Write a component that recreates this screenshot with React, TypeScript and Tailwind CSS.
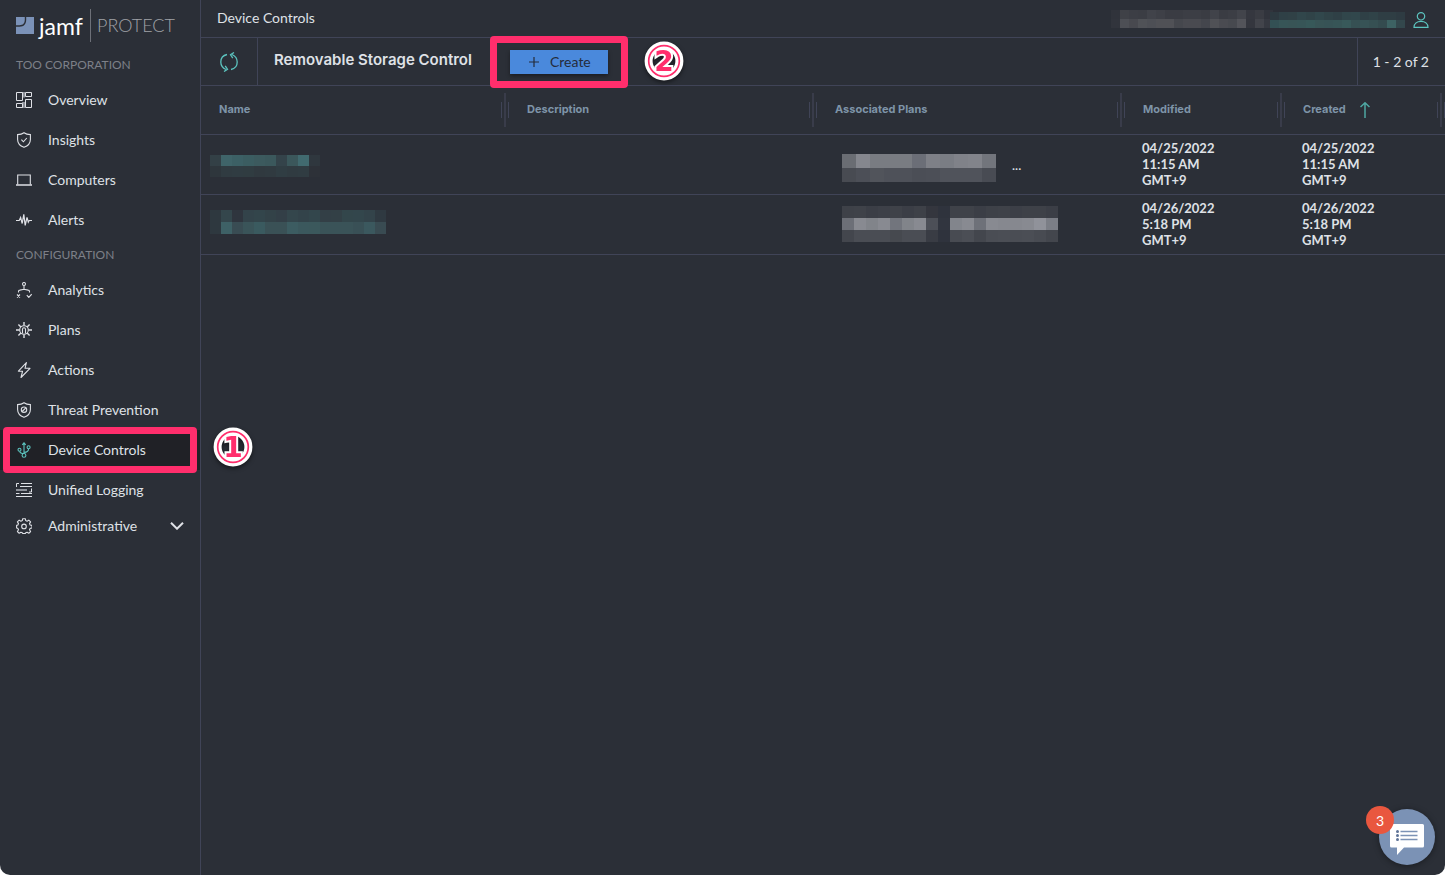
import { useState } from "react";
import type { ReactNode } from "react";
import { clsx } from "clsx";

interface NavItem {
  label: string;
  icon: ReactNode;
}

interface DeviceControl {
  name: ReactNode;
  plans: ReactNode;
  truncated: boolean;
  modified: string[];
  created: string[];
}

function Icon({ children }: { children: ReactNode }) {
  return (
    <svg viewBox="0 0 16 16" className="h-4 w-4 shrink-0" fill="none" stroke="currentColor" strokeWidth="1.1" aria-hidden="true">
      {children}
    </svg>
  );
}

const shield = "M8 .8 C6.4 2 4 2.6 1.6 2.6 V7.5 C1.6 11.3 4.4 14 8 15.3 C11.6 14 14.4 11.3 14.4 7.5 V2.6 C12 2.6 9.6 2 8 .8 Z";

const overviewItems: NavItem[] = [
  {
    label: "Overview",
    icon: (
      <Icon>
        <path d="M6 0h3v5.5H6zM6 10h3v6H6z" fill="#8d9199" stroke="none" />
        <path d="M.5 .5h6v8h-6zM9.5 .5h6v4h-6zM.5 11.5h6v4h-6zM9.5 7.5h6v8h-6z" strokeWidth="1" />
      </Icon>
    ),
  },
  {
    label: "Insights",
    icon: (
      <Icon>
        <path d={shield} />
        <path d="M5.4 7.6l2 2.2 3.4-3.8" />
      </Icon>
    ),
  },
  {
    label: "Computers",
    icon: (
      <Icon>
        <path d="M1.7 12.5V3h12.6v9.5" />
        <path d="M0 13h16" strokeWidth="1.5" />
      </Icon>
    ),
  },
  {
    label: "Alerts",
    icon: (
      <Icon>
        <path d="M0 8.5h3.2l1.4-3 1.6 6L7.8 2.4l1.4 11 1.8-8 1.3 4.8.9-1.7H16" strokeWidth="1.2" />
      </Icon>
    ),
  },
];

const configItems: NavItem[] = [
  {
    label: "Analytics",
    icon: (
      <Icon>
        <circle cx="8" cy="2" r="1.5" />
        <path d="M8 3.6v4M2.5 10.5V9.4c0-1 .6-1.3 1.4-1.3L8 7.3l4.1.8c.8 0 1.4.3 1.4 1.3v1.1M1 12.5l3 3M4 12.5l-3 3M10.8 13.2l2 2.2 2.9-3.2" />
      </Icon>
    ),
  },
  {
    label: "Plans",
    icon: (
      <Icon>
        <circle cx="8" cy="8" r="4.3" />
        <path d="M8 0v3.6M8 12.4V16M0 8h3.6M12.4 8H16M2.4 2.4l2.5 2.5M11.1 11.1l2.5 2.5M2.4 13.6l2.5-2.5M11.1 4.9l2.5-2.5" strokeWidth="1.4" />
        <path d="M6.5 11.5V7.3c0-2 3-2 3 0v4.2" />
      </Icon>
    ),
  },
  {
    label: "Actions",
    icon: (
      <Icon>
        <path d="M10.4 .6L2.4 9.2h4.2L5 15.5l9-9.2H9z" strokeLinejoin="round" />
      </Icon>
    ),
  },
  {
    label: "Threat Prevention",
    icon: (
      <Icon>
        <path d={shield} />
        <circle cx="8" cy="7.7" r="2.7" />
        <path d="M6.2 9.5l3.6-3.6" />
      </Icon>
    ),
  },
  {
    label: "Device Controls",
    icon: (
      <Icon>
        <path d="M8 11.4V1.2M6.3 2.8L8 .8l1.7 2M3.7 9.3c.4 1.9 2 2.2 4.3 2.2M12.6 6.8c0 2.6-1.6 3.6-4.6 3.6" />
        <circle cx="3.5" cy="7.7" r="1.5" />
        <circle cx="12.6" cy="5.2" r="1.5" />
        <circle cx="8" cy="13.4" r="1.9" />
      </Icon>
    ),
  },
  {
    label: "Unified Logging",
    icon: (
      <Icon>
        <path d="M.5 5V1.5H3M5 1.5h11M4 4.500h12M15.5 6.5V10H13M0 11.500h3.5M5 11.5h11M0 14.5h16" strokeWidth="1" />
        <path d="M0 8h11" stroke="#8d9199" strokeWidth="2" />
      </Icon>
    ),
  },
];

// Pixelated placeholder for redacted text, one colour per block
function Mosaic({ rows, cell, className }: { rows: string[][]; cell: [number, number]; className?: string }) {
  const [w, h] = cell;
  const cols = Math.max(...rows.map((row) => row.length));
  return (
    <svg width={cols * w} height={rows.length * h} className={clsx("block shrink-0", className)} shapeRendering="crispEdges" aria-hidden="true">
      {rows.map((row, y) =>
        row.map((fill, x) => <rect key={`${x}-${y}`} x={x * w} y={y * h} width={w} height={h} fill={fill} />)
      )}
    </svg>
  );
}

const controls: DeviceControl[] = [
  {
    name: (
      <Mosaic
        cell={[11, 11]}
        className="-ml-2 mt-1"
        rows={[
          ["#334046", "#3f6469", "#3c6065", "#3b5d61", "#3c5a5e", "#3b585c", "#34434a", "#3b575b", "#416a6f", "#2f373e"],
          ["#2e363c", "#303b41", "#303c42", "#303c41", "#30393f", "#303a40", "#303d43", "#303b41", "#303c42", "#2d3138"],
        ]}
      />
    ),
    plans: (
      <Mosaic
        cell={[14, 14]}
        className="mt-2"
        rows={[
          ["#6a6d73", "#85878e", "#797c82", "#797c82", "#797c82", "#6b6e77", "#7e8087", "#7a7d84", "#808289", "#82848b", "#72757c"],
          ["#484b52", "#4c4f57", "#51545b", "#4e5159", "#4e5159", "#4b4e56", "#4c4f57", "#50535b", "#50535b", "#50535b", "#484b53"],
        ]}
      />
    ),
    truncated: true,
    modified: ["04/25/2022", "11:15 AM", "GMT+9"],
    created: ["04/25/2022", "11:15 AM", "GMT+9"],
  },
  {
    name: (
      <Mosaic
        cell={[11, 12]}
        className="-ml-2 mb-1"
        rows={[
          ["#2e383f", "#34464c", "#2f353e", "#33434a", "#33454b", "#334248", "#333f47", "#34464c", "#33434a", "#33464c", "#333f46", "#334046", "#33464b", "#33464c", "#33434a", "#2f3941"],
          ["#2e383f", "#3e6166", "#394c53", "#3a5459", "#3a5a5f", "#3a5156", "#3a5156", "#3c5c61", "#3b585d", "#3b585c", "#3a5358", "#3a5358", "#3a5358", "#395056", "#3b585e", "#394b52"],
        ]}
      />
    ),
    plans: (
      <Mosaic
        cell={[12, 12]}
        rows={[
          ["#3e4148", "#3f4249", "#3b3e46", "#3d4048", "#3f4249", "#3b3e46", "#3e4148", "#34363e", "#2f333d", "#3f4249", "#3f4249", "#3b3e46", "#3e4148", "#3f4249", "#3c3f47", "#3e4148", "#3e4148", "#3b3e46"],
          ["#6c6f77", "#888a91", "#81848a", "#888a91", "#72757d", "#81848a", "#888a91", "#4c4f57", "#31353f", "#82858c", "#888a91", "#6e7179", "#888a91", "#86888f", "#86888f", "#888a91", "#90929a", "#7b7e86"],
          ["#43464d", "#4a4d54", "#4a4d54", "#4a4d54", "#46494f", "#4a4d54", "#4a4d54", "#393c44", "#2f333d", "#484b52", "#4b4e55", "#43464d", "#4a4d54", "#4b4e55", "#4a4d54", "#4b4e55", "#484b52", "#43464d"],
        ]}
      />
    ),
    truncated: false,
    modified: ["04/26/2022", "5:18 PM", "GMT+9"],
    created: ["04/26/2022", "5:18 PM", "GMT+9"],
  },
];

// Numbered marker used by the walkthrough overlay
function StepMarker({ step, className }: { step: string; className: string }) {
  return (
    <svg viewBox="0 0 40 40" className={clsx("pointer-events-none absolute z-10 h-10 w-10 drop-shadow-[0_2px_2px_rgba(0,0,0,0.5)]", className)}>
      <circle cx="20" cy="20" r="15.4" fill="none" stroke="#fff" strokeWidth="8" />
      <text
        x="20"
        y="30"
        textAnchor="middle"
        fill="#ff2e6c"
        stroke="#fff"
        strokeWidth="4"
        paintOrder="stroke"
        className="font-['DejaVu_Sans','Liberation_Sans',sans-serif] text-[28px] font-bold"
      >
        {step}
      </text>
      <circle cx="20" cy="20" r="15.3" fill="none" stroke="#ff2e6c" strokeWidth="1.7" />
    </svg>
  );
}

function Highlight({ className }: { className: string }) {
  return <span className={clsx("pointer-events-none absolute z-10 rounded-[4px] border-[7px] border-[#ff2e6c]", className)} />;
}

function SectionHeading({ children }: { children: ReactNode }) {
  return <h2 className="flex h-[30px] items-center px-4 text-[12px] uppercase text-[#7d8088]">{children}</h2>;
}

function NavLink({ item, active, onSelect }: { item: NavItem; active: boolean; onSelect: () => void }) {
  return (
    <a
      href="#"
      onClick={onSelect}
      className={clsx("flex h-10 items-center gap-4 px-4 text-[14px]", active && "bg-[#202126]")}
    >
      <span className={clsx(active ? "text-[#5cc4bf]" : "text-[#dfe1e6]")}>{item.icon}</span>
      <span className="pb-0.5">{item.label}</span>
    </a>
  );
}

function Sidebar() {
  const [active, setActive] = useState("Device Controls");

  return (
    <aside className="w-[201px] shrink-0 border-r border-[#404457]">
      <div className="flex h-[50px] items-center px-4">
        <svg viewBox="0 0 18 17" className="h-[17px] w-[18px] shrink-0" fill="#7b92b8" aria-hidden="true">
          <path d="M0 0h8.8v2.5C8.8 6.5 7 8.2 3.5 8.2H0z" />
          <path d="M10.2 0H18v17H0V9.7h3.5c4.5 0 6.7-2.5 6.7-7.2z" />
        </svg>
        <span className="w-[56px] pl-[5px] pt-px text-[23px] leading-8 text-white">jamf</span>
        <span className="h-[33px] w-px bg-[#6d7078]" />
        <span className="ml-[6px] text-[18px] font-light text-[#a0a2a7]">PROTECT</span>
      </div>

      <nav>
        <SectionHeading>Too Corporation</SectionHeading>
        {overviewItems.map((item) => (
          <NavLink key={item.label} item={item} active={active === item.label} onSelect={() => setActive(item.label)} />
        ))}
        <SectionHeading>Configuration</SectionHeading>
        {configItems.map((item) => (
          <div key={item.label} className="relative">
            <NavLink item={item} active={active === item.label} onSelect={() => setActive(item.label)} />
            {item.label === "Device Controls" && (
              <>
                <Highlight className="-inset-y-[3px] left-[3px] right-[3px]" />
                <StepMarker step="1" className="-right-[53px] -top-[3px]" />
              </>
            )}
          </div>
        ))}
        <button type="button" className="flex h-8 w-full items-center gap-4 px-4 text-left text-[14px]">
          <Icon>
            <path d="M6.7 .7h2.6l.4 1.9 1.4.6 1.7-1.1 1.8 1.8-1.1 1.7.6 1.4 1.9.4V10l-1.9.4-.6 1.4 1.1 1.7-1.8 1.8-1.7-1.1-1.4.6-.4 .8H6.7l-.4-.8-1.4-.6-1.7 1.1-1.8-1.8 1.1-1.7-.6-1.4L.6 10V7.4L1.9 7l.6-1.4L1.4 3.9l1.8-1.8 1.7 1.1 1.4-.6z" strokeLinejoin="round" />
            <circle cx="8" cy="8.4" r="2.3" />
          </Icon>
          <span className="flex-1 pb-0.5">Administrative</span>
          <svg viewBox="0 0 14 8" className="h-2 w-[14px]" fill="none" stroke="currentColor" strokeWidth="2" aria-hidden="true">
            <path d="M1 .7l6 6 6-6" />
          </svg>
        </button>
      </nav>
    </aside>
  );
}

function ColumnHeader({ label, sorted }: { label: string; sorted?: boolean }) {
  return (
    <th
      scope="col"
      className="relative p-0 pl-[18px] text-left font-['Inter','Liberation_Sans',sans-serif] text-[11px] font-bold text-[#7e94a8]"
    >
      <span className="flex items-center gap-[14px]">
        <span className="pb-0.5">{label}</span>
        {sorted && (
          <svg viewBox="0 0 10 16" className="h-4 w-[10px] text-[#4fa8a3]" fill="none" stroke="currentColor" strokeWidth="1.5" aria-hidden="true">
            <path d="M5 16V1M.5 5L5 .8 9.5 5" />
          </svg>
        )}
      </span>
      <span className="absolute inset-y-0 right-0 flex items-center gap-[2px]">
        <span className="h-4 w-px bg-[#404457]" />
        <span className="h-[34px] w-[2px] bg-[#393c4a]" />
        <span className="h-4 w-px bg-[#404457]" />
      </span>
    </th>
  );
}

function DateCell({ lines }: { lines: string[] }) {
  return (
    <td className="p-0 pl-[17px] text-[13px] font-bold leading-4">
      {lines.map((line) => (
        <div key={line}>{line}</div>
      ))}
    </td>
  );
}

function ControlsTable() {
  return (
    <table className="w-full table-fixed border-collapse">
      <colgroup>
        <col />
        <col />
        <col />
        <col className="w-[160px]" />
        <col className="w-[160px]" />
      </colgroup>
      <thead>
        <tr className="h-12 border-b border-[#404457]">
          <ColumnHeader label="Name" />
          <ColumnHeader label="Description" />
          <ColumnHeader label="Associated Plans" />
          <ColumnHeader label="Modified" />
          <ColumnHeader label="Created" sorted />
        </tr>
      </thead>
      <tbody>
        {controls.map((control, i) => (
          <tr key={i} className="h-[60px] border-b border-[#404457]">
            <td className="p-0 pl-[17px]">{control.name}</td>
            <td />
            <td className="p-0 pl-[25px]">
              <div className="flex items-center gap-4 text-[13px] font-semibold">
                {control.plans}
                {control.truncated && <span className="pt-1">...</span>}
              </div>
            </td>
            <DateCell lines={control.modified} />
            <DateCell lines={control.created} />
          </tr>
        ))}
      </tbody>
    </table>
  );
}

function ChatButton() {
  return (
    <button
      type="button"
      aria-label="Open messages"
      className="fixed bottom-[10px] right-[10px] flex h-14 w-14 items-center justify-center rounded-full bg-[#7b92b5] shadow-[0_1px_6px_rgba(0,0,0,0.4)]"
    >
      <svg viewBox="0 0 34 31" className="mt-1 h-[31px] w-[34px]" aria-hidden="true">
        <path d="M1.5 0h31Q34 0 34 1.5V22q0 1.5-1.5 1.5H14L7 31v-7.5H1.5Q0 23.5 0 22V1.5Q0 0 1.5 0z" fill="#fff" />
        <g stroke="#7b92b5" strokeWidth="1.5">
          <path d="M10.5 7.5h17M10.5 11.5h17M10.5 15.5h17" />
        </g>
        <g fill="#5f7497">
          <circle cx="7.5" cy="7.5" r="1.5" />
          <circle cx="7.5" cy="11.5" r="1.5" />
          <circle cx="7.5" cy="15.5" r="1.5" />
        </g>
      </svg>
      <span className="absolute -left-[13px] -top-[3px] flex h-7 w-7 items-center justify-center rounded-full bg-[#e9573f] text-[14px] text-white">
        3
      </span>
    </button>
  );
}

export default function App() {
  return (
    <div className="bg-white font-['Lato','Liberation_Sans',sans-serif]">
      <div className="flex min-h-screen rounded-b-[10px] bg-[#2b2f37] text-[#dfe1e6]">
        <Sidebar />

        <main className="min-w-0 flex-1">
          <header className="flex h-[38px] items-center justify-between border-b border-[#404457] px-4">
            <span className="pb-0.5 text-[14px]">Device Controls</span>
            <div className="flex items-end">
              <Mosaic
                cell={[9, 9]}
                className="-mr-[3px]"
                rows={[
                  ["#30333b", "#3f4147", "#3c3e45", "#3b3d44", "#41434a", "#3e4047", "#3a3c43", "#3a3c43", "#3c3e45", "#3c3e45", "#3a3c43", "#41434a", "#3a3c43", "#3c3e45", "#42444b", "#35373f", "#3a3c43", "#31343c"],
                  ["#31343c", "#4d4f55", "#48494f", "#505257", "#4d4f55", "#505156", "#505156", "#45474d", "#494a50", "#494a50", "#44464d", "#505156", "#4a4b51", "#47494f", "#53545a", "#34363e", "#42444b", "#363941"],
                ]}
              />
              <Mosaic
                cell={[9, 8]}
                className="mr-2"
                rows={[
                  ["#2d3940", "#2f4046", "#304146", "#31464b", "#304348", "#31474c", "#304348", "#2f4046", "#31464b", "#31474c", "#2f4046", "#304348", "#2f3e44", "#2f3e44", "#2e3b42"],
                  ["#335054", "#375557", "#385456", "#375557", "#375859", "#385456", "#375356", "#375557", "#38595a", "#365053", "#375356", "#365053", "#344b4f", "#3d6263", "#33474c"],
                ]}
              />
              <button type="button" aria-label="Account" className="text-[#5cc4bf]">
                <svg viewBox="0 0 16 16" className="block h-4 w-4" fill="none" stroke="currentColor" strokeWidth="1.2" aria-hidden="true">
                  <circle cx="8" cy="4.3" r="3.7" />
                  <path d="M1 15.4C1 11.5 4 9.3 8 9.3s7 2.2 7 6.1z" />
                </svg>
              </button>
            </div>
          </header>

          <div className="flex h-12 items-center border-b border-[#404457]">
            <button
              type="button"
              aria-label="Refresh"
              className="flex w-[57px] items-center justify-center self-stretch border-r border-[#404457] text-[#5cc4bf]"
            >
              <svg viewBox="0 0 18 20" className="h-5 w-[18px]" fill="none" stroke="currentColor" strokeWidth="1.3" aria-hidden="true">
                <path d="M7 2.5C3 3.4 .8 6.5 .8 10c0 3.2 1.8 6 5.2 7.5" />
                <path d="M4 19.5l3.5-2.3-2.3-3.4M11 17.5c4-.9 6.2-4 6.2-7.5 0-3.2-1.8-6-5.2-7.5" />
                <path d="M14 .5l-3.5 2.3 2.3 3.4" />
              </svg>
            </button>
            <h1 className="w-[236px] whitespace-nowrap pb-0.5 pl-4 font-['Inter','Liberation_Sans',sans-serif] text-[15px] font-semibold">
              Removable Storage Control
            </h1>
            <div className="relative ml-4">
              <button
                type="button"
                className="flex h-6 items-center gap-[11px] bg-[#4a89dc] pl-[19px] pr-[17px] text-[14px] text-[#252c3a] shadow-[0_2px_4px_rgba(0,0,0,0.4)]"
              >
                <svg viewBox="0 0 10 10" className="h-[10px] w-[10px]" stroke="currentColor" strokeWidth="1.2" aria-hidden="true">
                  <path d="M5 0v10M0 5h10" />
                </svg>
                Create
              </button>
              <Highlight className="-bottom-[14px] -left-5 -right-5 -top-[14px]" />
              <StepMarker step="2" className="-right-[76px] -top-[9px]" />
            </div>
            <div className="ml-auto flex items-center self-stretch border-l border-[#404457] pl-[15px] pr-4 text-[14px]">1 - 2 of 2</div>
          </div>

          <ControlsTable />
        </main>
      </div>
      <ChatButton />
    </div>
  );
}
